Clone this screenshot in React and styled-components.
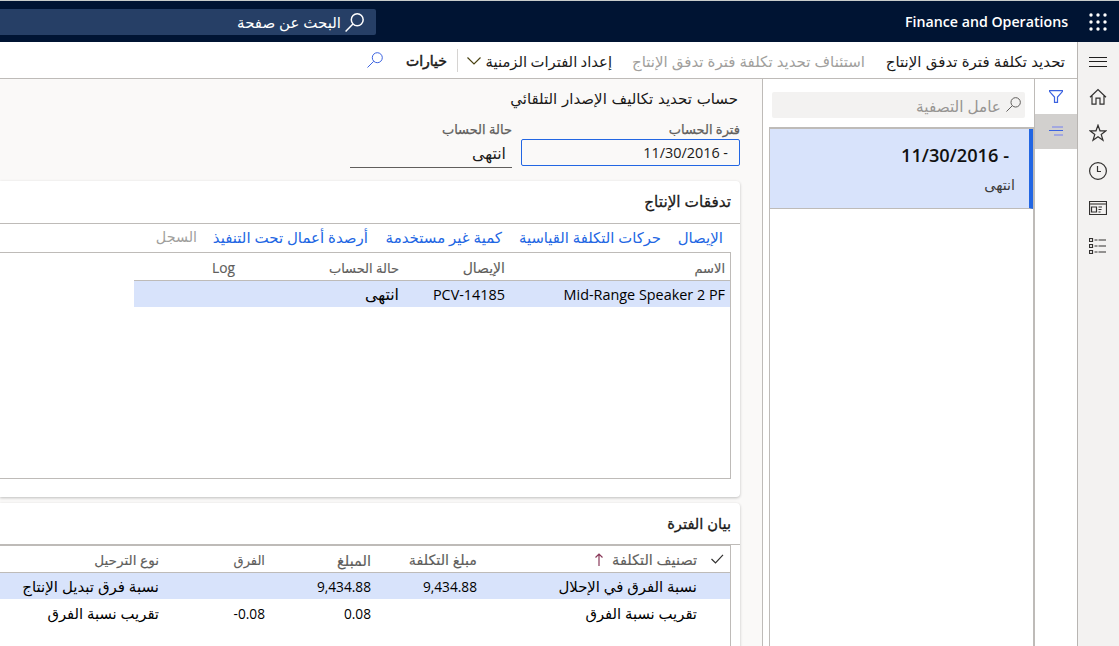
import React from "react";
import styled, { createGlobalStyle, css } from "styled-components";

const GlobalStyle = createGlobalStyle`
  * { box-sizing: border-box; }
  html, body { margin: 0; padding: 0; overflow: hidden; }
  body { font-family: "Open Sans", "DejaVu Sans", sans-serif; color: #1b1a19; background: #fff; }
`;

/* size, word gap and reserved width of one text */
const measure = css`
  display: block;
  flex: none;
  white-space: nowrap;
  font-size: ${(p) => p.$size || 15}px;
  word-spacing: ${(p) => p.$gap || 0}px;
  ${(p) => p.$w && `width: ${p.$w}px;`}
`;

const Page = styled.div`
  width: 1119px;
  height: 646px;
  display: flex;
  flex-direction: column;
  overflow: hidden;
  direction: rtl;
`;
const TopBar = styled.header`
  flex: none;
  height: 42px;
  border-top: 1px solid #c8cccb;
  background: #001433;
  color: #fff;
  display: flex;
  align-items: center;
  padding-right: 12px;
`;
const Brand = styled.span`
  ${measure}
  font-weight: 600;
  line-height: 20px;
  margin-right: 21px;
  direction: ltr;
`;
const PageSearch = styled.div`
  margin-right: auto;
  width: 376px;
  height: 26px;
  margin-top: 1px;
  border-radius: 0 2px 2px 0;
  background: #263f66;
  display: flex;
  align-items: center;
  padding-right: 12px;
  gap: 4px;
`;
const PageSearchText = styled.span`
  ${measure}
  line-height: 22px;
`;
const Body = styled.div`
  flex: 1;
  min-height: 0;
  display: flex;
`;
const Rail = styled.nav`
  flex: none;
  width: 42px;
  background: #f3f2f1;
  border-left: 1px solid #b8b5b2;
  padding-right: 2px;
  display: flex;
  flex-direction: column;
  align-items: center;
`;
const RailItem = styled.div`
  height: ${(p) => p.$h}px;
  display: flex;
  align-items: center;
  justify-content: center;
`;
const Workspace = styled.div`
  flex: 1;
  min-width: 0;
  display: flex;
  flex-direction: column;
`;
const Toolbar = styled.div`
  flex: none;
  height: 37px;
  border-bottom: 1px solid #bebbb8;
  background: #fff;
  display: flex;
  align-items: center;
  padding-right: 12px;
`;
const Action = styled.span`
  ${measure}
  line-height: 22px;
  margin-top: 1px;
  margin-left: ${(p) => p.$after}px;
  color: ${(p) => (p.$disabled ? "#a19f9d" : "#1b1a19")};
  ${(p) => p.$strong && "-webkit-text-stroke: 0.5px #1b1a19;"}
`;
const Divider = styled.div`
  width: 1px;
  height: 23px;
  margin: 0 9px 0 10px;
  background: #d6d4d2;
`;
const Panels = styled.div`
  flex: 1;
  min-height: 0;
  display: flex;
`;
const FilterStrip = styled.div`
  flex: none;
  width: 43px;
  border-left: 1px solid #bebbb8;
`;
const StripButton = styled.div`
  height: 35px;
  display: flex;
  align-items: center;
  justify-content: center;
  padding-bottom: 1px;
  background: ${(p) => (p.$active ? "#d2d0ce" : "#fff")};
`;
const ListPane = styled.aside`
  flex: none;
  width: 272px;
  border-left: 1px solid #bebbb8;
  padding-left: 6px;
  display: flex;
  flex-direction: column;
  background: #fff;
`;
const ListFilter = styled.div`
  height: 26px;
  flex: none;
  margin: 13px 9px 9px 3px;
  border-radius: 2px;
  background: #f3f2f1;
  display: flex;
  align-items: center;
  padding: 0 4px 2px 0;
  gap: 5px;
`;
const ListFilterText = styled.span`
  ${measure}
  line-height: 22px;
  margin-top: 4px;
  color: #979593;
`;
const List = styled.div`
  flex: 1;
  border: solid #bebbb8;
  border-width: 2px 1px 0 1px;
`;
const ListCard = styled.div`
  height: 80px;
  background: #d8e3fb;
  border-bottom: 1px solid #bebbb8;
  border-right: 4px solid #2266e3;
  padding: 13px 15px 0 0;
`;
const CardTitle = styled.span`
  ${measure}
  font-weight: 600;
  line-height: 26px;
  margin-right: 5px;
  color: #111;
`;
const CardStatus = styled.span`
  ${measure}
  line-height: 20px;
  margin-top: 7px;
  margin-right: -1px;
  color: #3b3a39;
`;
const Main = styled.main`
  flex: 1;
  min-width: 0;
  background: #faf9f8;
  display: flex;
  flex-direction: column;
  padding-right: 22px;
`;
const Heading = styled.h1`
  ${measure}
  font-weight: 400;
  line-height: 22px;
  margin: 8px 2px 0 0;
`;
const Fields = styled.div`
  flex: none;
  display: flex;
  gap: 9px;
  margin-top: 10px;
  height: 62px;
`;
const Field = styled.div`
  width: ${(p) => p.$width}px;
`;
const FieldLabel = styled.span`
  ${measure}
  line-height: 20px;
  color: #605e5c;
  -webkit-text-stroke: 0.25px #605e5c;
`;
const PeriodInput = styled.div`
  height: 27px;
  border: 1px solid #2266e3;
  border-radius: 2px;
  padding-right: 11px;
  display: flex;
  align-items: center;
`;
const StatusValue = styled.div`
  height: 29px;
  border-bottom: 1px solid #605e5c;
  padding: 3px 6px 0 0;
`;
const Value = styled.span`
  ${measure}
  line-height: 22px;
`;
const FastTab = styled.section`
  flex: none;
  height: ${(p) => p.$height}px;
  margin-bottom: 6px;
  background: #fff;
  border-radius: 0 4px 4px 0;
  box-shadow: 0 1px 3px rgba(0, 0, 0, 0.24);
`;
const FastTabTitle = styled.h2`
  ${measure}
  margin: 0;
  height: ${(p) => p.$height}px;
  line-height: ${(p) => p.$height - 1}px;
  padding-right: 9px;
  font-weight: 400;
  -webkit-text-stroke: 0.3px #1b1a19;
`;
const FastTabBody = styled.div`
  border-top: 1px solid #bebbb8;
`;
const Links = styled.div`
  height: 28px;
  display: flex;
  align-items: center;
  gap: 17px;
  padding: 0 17px 2px 0;
`;
const Link = styled.a`
  ${measure}
  line-height: 22px;
  color: ${(p) => (p.$disabled ? "#a19f9d" : "#2266e3")};
`;
const Grid = styled.div`
  height: ${(p) => p.$height}px;
  margin-right: 9px;
  border: solid #bebbb8;
  border-width: 1px 1px ${(p) => (p.$open ? 0 : 1)}px 0;
`;
const GridRow = styled.div`
  display: grid;
  grid-template-columns: ${(p) => p.$columns};
  width: ${(p) => p.$width}px;
  height: ${(p) => p.$height || 27}px;
  align-items: center;
  border-bottom: 1px solid ${(p) => (p.$head ? "#bebbb8" : "transparent")};
  background: ${(p) => (p.$selected ? "#d8e3fb" : "transparent")};
  background-clip: padding-box;
`;
const HeadCell = styled.span`
  ${measure}
  line-height: 20px;
  margin-top: ${(p) => p.$drop ?? 3}px;
  color: #605e5c;
  -webkit-text-stroke: 0.15px #605e5c;
  display: flex;
  gap: 9px;
  align-items: center;
`;
const Cell = styled.span`
  ${measure}
  line-height: 22px;
  color: #000;
`;
const Num = styled(Cell)`
  direction: ltr;
  text-align: right;
  padding-top: 2px;
`;

const Magnifier = ({ size, color, stroke = 1 }) => (
  <svg width={size} height={size} viewBox="0 0 16 16" fill="none" stroke={color} strokeWidth={(stroke * 16) / size}>
    <circle cx="10.3" cy="5.7" r="5" />
    <path d="M6.7 9.3 .5 15.5" />
  </svg>
);
const Waffle = () => (
  <svg width="18" height="18" viewBox="0 0 18 18" fill="#fff">
    {[2, 9, 16].map((y) => [2, 9, 16].map((x) => <circle key={`${x}-${y}`} cx={x} cy={y} r="1.7" />))}
  </svg>
);
const Icon = ({ w = 18, h = 18, color = "#323130", children }) => (
  <svg width={w} height={h} viewBox={`0 0 ${w} ${h}`} fill="none" stroke={color} strokeWidth="1.2">
    {children}
  </svg>
);

const FLOW_COLUMNS = "5px 220px 106px 164px 101px";
const PERIOD_COLUMNS = "33px 220px 106px 106px 106px 159px";

export default function App() {
  return (
    <>
      <GlobalStyle />
      <Page>
        <TopBar>
          <Waffle />
          <Brand $size={14.2} $w={163}>Finance and Operations</Brand>
          <PageSearch>
            <Magnifier size={19} color="#fff" stroke={1.5} />
            <PageSearchText $size={15}>البحث عن صفحة</PageSearchText>
          </PageSearch>
        </TopBar>
        <Body>
          <Rail>
            <RailItem $h={38}>
              <Icon><path d="M0 5.5h18M0 9.5h18M0 14.5h18" stroke="#201f1e" strokeWidth="1" /></Icon>
            </RailItem>
            <RailItem $h={34}>
              <Icon><path d="M1 9.2 9 1.5l8 7.7M3 7.5v8.7h4v-6h4v6h4V7.5" /></Icon>
            </RailItem>
            <RailItem $h={38}>
              <Icon><path d="m9 1.2 2 5.6h6l-4.8 3.6 1.8 5.9L9 12.8l-5 3.5 1.8-5.9L1 6.8h6z" /></Icon>
            </RailItem>
            <RailItem $h={38}>
              <Icon><circle cx="9" cy="9" r="8.4" /><path d="M8.5 4v5.5H12" /></Icon>
            </RailItem>
            <RailItem $h={36}>
              <Icon h={16}>
                <path d="M.5 1.5h17v13H.5z" />
                <path d="M1 4h16" stroke="#8a8886" strokeWidth="2" />
                <path d="M2.5 7h5v5h-5zM9.5 7H13M9.5 9.5h3M9.5 12h2" />
              </Icon>
            </RailItem>
            <RailItem $h={40}>
              <Icon>
                <path d="M.5 1.5h3v3h-3zM.5 7.5h3v3h-3zM.5 13.5h3v3h-3z" />
                <path d="M5.5 3h3M9.5 3H17M5.5 9h3M9.5 9H17M5.5 15h3M9.5 15H17" />
              </Icon>
            </RailItem>
          </Rail>
          <Workspace>
            <Toolbar>
              <Action $w={179} $gap={0.4} $after={21}>تحديد تكلفة فترة تدفق الإنتاج</Action>
              <Action $w={233} $gap={0.2} $after={20} $disabled>استئناف تحديد تكلفة فترة تدفق الإنتاج</Action>
              <Action $w={126} $size={14.8} $gap={-0.5} $after={5}>إعداد الفترات الزمنية</Action>
              <Icon w={14} h={9}><path d="m.5 1.5 6.5 6.5 6.5-6.5" stroke="#4a4212" /></Icon>
              <Divider />
              <Action $w={41} $size={14} $after={23} $strong>خيارات</Action>
              <Magnifier size={16} color="#3c63e0" />
            </Toolbar>
            <Panels>
              <FilterStrip>
                <StripButton>
                  <Icon w={14} h={13} color="#3c63e0"><path d="M.6.6h12.800v1L8.500 7v5.300h-3V7L.6 1.600z" /></Icon>
                </StripButton>
                <StripButton $active>
                  <Icon w={14} h={10}>
                    <path d="M3 1h11M5 9h9" stroke="#a3a8e0" strokeWidth="2" />
                    <path d="M0 4.5h14" stroke="#3c63e0" strokeWidth="1" />
                  </Icon>
                </StripButton>
              </FilterStrip>
              <ListPane>
                <ListFilter>
                  <Magnifier size={15} color="#605e5c" />
                  <ListFilterText $size={15.3}>عامل التصفية</ListFilterText>
                </ListFilter>
                <List>
                  <ListCard>
                    <CardTitle $size={18.2}>- 11/30/2016</CardTitle>
                    <CardStatus $size={14.3}>انتهى</CardStatus>
                  </ListCard>
                </List>
              </ListPane>
              <Main>
                <Heading $size={15} $gap={0.9}>حساب تحديد تكاليف الإصدار التلقائي</Heading>
                <Fields>
                  <Field $width={219}>
                    <FieldLabel $size={13}>فترة الحساب</FieldLabel>
                    <PeriodInput><Value $size={14.4}>- 11/30/2016</Value></PeriodInput>
                  </Field>
                  <Field $width={162}>
                    <FieldLabel $size={13}>حالة الحساب</FieldLabel>
                    <StatusValue><Value $size={15.8}>انتهى</Value></StatusValue>
                  </Field>
                </Fields>
                <FastTab $height={316}>
                  <FastTabTitle $size={15.3} $height={42}>تدفقات الإنتاج</FastTabTitle>
                  <FastTabBody>
                    <Links>
                      <Link $w={45}>الإيصال</Link>
                      <Link $w={142} $size={14.8}>حركات التكلفة القياسية</Link>
                      <Link $w={117}>كمية غير مستخدمة</Link>
                      <Link $w={154}>أرصدة أعمال تحت التنفيذ</Link>
                      <Link $w={41} $size={14.3} $disabled>السجل</Link>
                    </Links>
                    <Grid $height={227}>
                      <GridRow $columns={FLOW_COLUMNS} $width={596} $height={28} $head>
                        <i />
                        <HeadCell $size={13}>الاسم</HeadCell>
                        <HeadCell $size={14}>الإيصال</HeadCell>
                        <HeadCell $size={13}>حالة الحساب</HeadCell>
                        <HeadCell $size={13.8}>Log</HeadCell>
                      </GridRow>
                      <GridRow $columns={FLOW_COLUMNS} $width={596} $selected>
                        <i />
                        <Num $size={14.4}>Mid-Range Speaker 2 PF</Num>
                        <Num $size={14.4}>PCV-14185</Num>
                        <Cell $size={15.8}>انتهى</Cell>
                      </GridRow>
                    </Grid>
                  </FastTabBody>
                </FastTab>
                <FastTab $height={160}>
                  <FastTabTitle $size={14.7} $height={41}>بيان الفترة</FastTabTitle>
                  <FastTabBody>
                    <Grid $height={110} $open>
                      <GridRow $columns={PERIOD_COLUMNS} $width={730} $head>
                        <HeadCell $drop={0}>
                          <Icon w={20} h={10}><path d="m1.5 5 4 4L13 .8" /></Icon>
                        </HeadCell>
                        <HeadCell $size={14.5} $drop={1}>
                          تصنيف التكلفة
                          <Icon w={8} h={13} color="#8a3a5a"><path d="M4 13V1M.5 4.5 4 1l3.500 3.500" /></Icon>
                        </HeadCell>
                        <HeadCell $size={14.3} $drop={1}>مبلغ التكلفة</HeadCell>
                        <HeadCell $size={14.6} $drop={1}>المبلغ</HeadCell>
                        <HeadCell $size={13} $drop={1}>الفرق</HeadCell>
                        <HeadCell $size={13.6} $drop={1}>نوع الترحيل</HeadCell>
                      </GridRow>
                      <GridRow $columns={PERIOD_COLUMNS} $width={730} $selected>
                        <i />
                        <Cell $size={14.9}>نسبة الفرق في الإحلال</Cell>
                        <Num $size={13.7}>9,434.88</Num>
                        <Num $size={13.7}>9,434.88</Num>
                        <i />
                        <Cell>نسبة فرق تبديل الإنتاج</Cell>
                      </GridRow>
                      <GridRow $columns={PERIOD_COLUMNS} $width={730}>
                        <i />
                        <Cell $size={14.8}>تقريب نسبة الفرق</Cell>
                        <i />
                        <Num $size={13.7}>0.08</Num>
                        <Num $size={13.7}>-0.08</Num>
                        <Cell $size={14.8}>تقريب نسبة الفرق</Cell>
                      </GridRow>
                    </Grid>
                  </FastTabBody>
                </FastTab>
              </Main>
            </Panels>
          </Workspace>
        </Body>
      </Page>
    </>
  );
}
